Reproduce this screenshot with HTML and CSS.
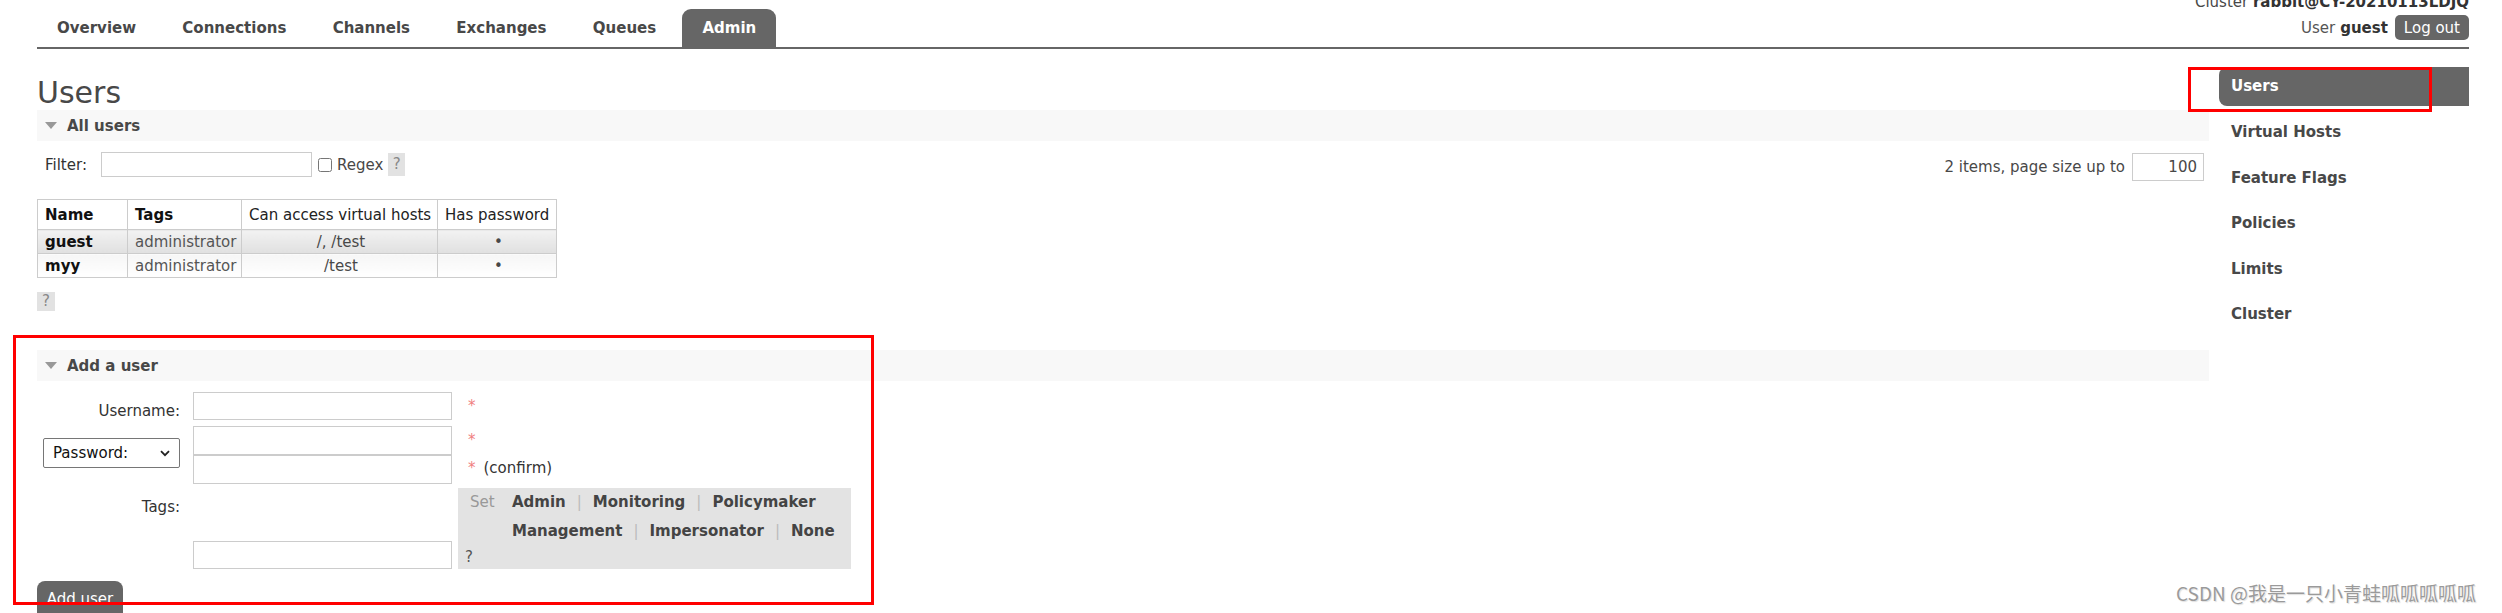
FILE: index.html
```html
<!DOCTYPE html>
<html lang="en">
<head>
<meta charset="utf-8">
<title>RabbitMQ Management</title>
<link rel="stylesheet" href="styles.css">
</head>
<body>
<div class="outer">
  <header class="header">
    <ul class="menu">
      <li><a class="tab">Overview</a></li>
      <li><a class="tab">Connections</a></li>
      <li><a class="tab">Channels</a></li>
      <li><a class="tab">Exchanges</a></li>
      <li><a class="tab">Queues</a></li>
      <li><a class="tab selected">Admin</a></li>
    </ul>
    <div class="login">
      <div class="cluster">Cluster <b>rabbit@CY-20210113LDJQ</b></div>
      <div class="user">User <b>guest</b><button class="logout">Log out</button></div>
    </div>
  </header>

  <div class="page">
    <main class="main">
      <h1 class="title">Users</h1>

      <section class="section">
        <h2 class="section-title"><span class="tri"></span>All users</h2>
        <div class="filter-row">
          <div class="filter-left">
            <label class="filter-label">Filter:</label>
            <input class="filter-input" type="text">
            <input class="regex-box" type="checkbox">
            <span class="regex-label">Regex</span>
            <span class="help">?</span>
          </div>
          <div class="filter-right">
            <span>2 items, page size up to</span>
            <input class="page-size" type="text" value="100">
          </div>
        </div>

        <table class="list">
          <colgroup>
            <col class="c-name"><col class="c-tags"><col class="c-vhosts"><col class="c-pass">
          </colgroup>
          <thead>
            <tr>
              <th class="strong">Name</th>
              <th class="strong">Tags</th>
              <th>Can access virtual hosts</th>
              <th>Has password</th>
            </tr>
          </thead>
          <tbody>
            <tr class="alt1">
              <td class="name">guest</td>
              <td class="tag">administrator</td>
              <td class="center">/, /test</td>
              <td class="center">•</td>
            </tr>
            <tr class="alt2">
              <td class="name">myy</td>
              <td class="tag">administrator</td>
              <td class="center">/test</td>
              <td class="center">•</td>
            </tr>
          </tbody>
        </table>
        <div class="help-row"><span class="help">?</span></div>
      </section>

      <section class="section add-section">
        <h2 class="section-title"><span class="tri"></span>Add a user</h2>
        <div class="form">
          <div class="frow row-user">
            <label class="flabel">Username:</label>
            <div class="fcell"><input class="finput" type="text"></div>
            <div class="fnote"><span class="req">*</span></div>
          </div>
          <div class="frow row-pass">
            <div class="flabel-sel">
              <div class="select">Password:<svg class="chev" width="10" height="7" viewBox="0 0 10 7"><path d="M1 1.2 L5 5.2 L9 1.2" fill="none" stroke="#222" stroke-width="1.8"/></svg></div>
            </div>
            <div class="fcell pass-stack">
              <input class="finput pass1" type="password">
              <input class="finput pass2" type="password">
            </div>
            <div class="fnote">
              <div class="nline"><span class="req">*</span></div>
              <div class="nline"><span class="req">*</span><span class="confirm">(confirm)</span></div>
            </div>
          </div>
          <div class="frow row-tags">
            <label class="flabel">Tags:</label>
            <div class="fcell tags-cell"><input class="finput" type="text"></div>
            <div class="tagbox">
              <div class="tag-lines">
                <span class="set">Set</span>
                <div class="links">
                  <div class="lline"><a>Admin</a><span class="sep">|</span><a>Monitoring</a><span class="sep">|</span><a>Policymaker</a></div>
                  <div class="lline"><a>Management</a><span class="sep">|</span><a>Impersonator</a><span class="sep">|</span><a>None</a></div>
                </div>
              </div>
              <div class="tag-help">?</div>
            </div>
          </div>
        </div>
        <button class="add-btn">Add user</button>
      </section>
    </main>

    <aside class="rhs">
      <ul class="rhs-list">
        <li class="rhs-item selected">Users</li>
        <li class="rhs-item">Virtual Hosts</li>
        <li class="rhs-item">Feature Flags</li>
        <li class="rhs-item">Policies</li>
        <li class="rhs-item">Limits</li>
        <li class="rhs-item">Cluster</li>
      </ul>
    </aside>
  </div>
</div>

<div class="mark mark-users"></div>
<div class="mark mark-form"></div>
<div class="watermark">CSDN @我是一只小青蛙呱呱呱呱呱</div>
</body>
</html>
```

FILE: styles.css
```css
* { box-sizing: border-box; }

html, body { height: 100%; }

body {
  margin: 0;
  font: 15px "DejaVu Sans", Verdana, sans-serif;
  color: #484848;
  background: #fff;
  overflow: hidden;
  position: relative;
}

.outer { margin: 0 33px 0 37px; }

/* ---------- header ---------- */
.header {
  display: flex;
  justify-content: space-between;
  align-items: flex-end;
  height: 49px;
  border-bottom: 2px solid #666;
}

.menu {
  display: flex;
  list-style: none;
  margin: 0;
  padding: 0;
}

.tab {
  display: block;
  height: 38px;
  line-height: 38px;
  padding: 0 20px;
  margin-right: 6.3px;
  font-weight: bold;
  color: #484848;
}

.tab.selected {
  background: #666;
  color: #fff;
  border-radius: 9px 9px 0 0;
}

.login {
  padding-bottom: 7px;
  display: flex;
  flex-direction: column;
  align-items: flex-end;
}

.cluster { line-height: 20px; margin-bottom: 3px; }
.cluster b, .user b { color: #333; }

.user {
  display: flex;
  align-items: center;
  height: 25px;
  color: #555;
}

.user b { margin-left: 5px; }

.logout {
  margin-left: 7px;
  height: 25px;
  padding: 0 9px;
  border: 0;
  border-radius: 5px;
  background: #666;
  color: #fff;
  font: 15px "DejaVu Sans", Verdana, sans-serif;
}

/* ---------- layout ---------- */
.page {
  display: flex;
  gap: 10px;
  align-items: flex-start;
}

.main { flex: 1; min-width: 0; }

.title {
  margin: 26px 0 0;
  font-size: 30px;
  line-height: 35px;
  font-weight: normal;
  color: #484848;
}

.section-title {
  margin: 0;
  height: 31px;
  display: flex;
  align-items: center;
  padding-left: 8px;
  background: #f8f8f8;
  font-size: 15px;
  font-weight: bold;
  color: #484848;
}

.tri {
  width: 0;
  height: 0;
  border-left: 6.5px solid transparent;
  border-right: 6.5px solid transparent;
  border-top: 7px solid #999;
  margin-right: 10px;
}

/* filter */
.filter-row {
  display: flex;
  justify-content: space-between;
  align-items: flex-start;
  margin-top: 11px;
  height: 29px;
}

.filter-left {
  display: flex;
  align-items: center;
  padding-left: 8px;
  height: 25px;
}

.filter-label { width: 56px; color: #333; }

.filter-input {
  width: 211px;
  height: 25px;
  border: 1px solid #ccc;
  padding: 0;
  margin: 0;
}

.regex-box {
  margin: 0 0 0 6px;
  width: 14px;
  height: 14px;
}

.regex-label { margin-left: 5px; color: #484848; }

.help {
  display: inline-block;
  width: 17px;
  height: 23px;
  line-height: 23px;
  text-align: center;
  background: #e2e2e2;
  color: #888;
}

.filter-left .help { margin-left: 5px; }

.filter-right {
  display: flex;
  align-items: center;
  margin-right: 5px;
  height: 29px;
  color: #484848;
}

.page-size {
  margin-left: 7px;
  width: 72px;
  height: 28px;
  border: 1px solid #ccc;
  padding: 0 6px 0 0;
  text-align: right;
  font: 15px "DejaVu Sans", Verdana, sans-serif;
  color: #484848;
}

/* table */
.list {
  margin-top: 18px;
  border-collapse: collapse;
  table-layout: fixed;
  width: 519px;
}

.c-name { width: 90px; }
.c-tags { width: 114px; }
.c-vhosts { width: 196px; }
.c-pass { width: 119px; }

.list th, .list td {
  border: 1px solid #ccc;
  padding: 0 4px 0 7px;
  white-space: nowrap;
  text-align: left;
}

.list th {
  height: 30px;
  font-weight: normal;
  color: #222;
  background: #fff;
}

.list th.strong { font-weight: bold; color: #111; }

.list td { height: 24px; }

.list tr.alt1 td { background: linear-gradient(#f2f2f2, #e0e0e0); }
.list tr.alt2 td { background: linear-gradient(#f6f6f6, #fff); }

.list td.name { font-weight: bold; color: #111; }
.list td.tag { color: #555; }
.list td.center { text-align: center; color: #484848; }

.help-row { margin-top: 14px; height: 19px; }
.help-row .help { width: 18px; height: 19px; line-height: 19px; }

/* add form */
.add-section { margin-top: 39px; }

.form { margin-top: 11px; }

.frow {
  display: grid;
  grid-template-columns: 156px 265px 1fr;
  align-items: start;
}

.row-pass { margin-top: 6px; }
.row-tags { margin-top: 4px; }

.flabel {
  text-align: right;
  padding-right: 13px;
  padding-top: 5px;
  height: 28px;
  line-height: 28px;
  color: #333;
}

.finput {
  display: block;
  width: 259px;
  height: 28px;
  border: 1px solid #ccc;
  margin: 0;
  padding: 0;
}

.pass-stack .pass1 { height: 29px; }
.pass-stack .pass2 { height: 29px; }

.fnote {
  padding-left: 10px;
  line-height: 28px;
  height: 28px;
}

.row-pass .fnote { height: 56px; }

.req { color: #f08080; }
.confirm { margin-left: 8px; color: #333; }

.flabel-sel { padding-left: 6px; padding-top: 12px; }

.select {
  width: 137px;
  height: 30px;
  border: 1px solid #767676;
  border-radius: 2px;
  display: flex;
  align-items: center;
  justify-content: space-between;
  padding: 0 9px 0 9px;
  color: #111;
  background: #fff;
}

.chev { display: block; }

.tags-cell { align-self: end; }

.tagbox {
  width: 393px;
  height: 81px;
  background: #e3e3e3;
  padding: 0 0 0 7px;
}

.tag-lines { display: flex; padding-left: 5px; }

.set { color: #999; width: 42px; line-height: 29px; }

.links { line-height: 29px; }

.links a { font-weight: bold; color: #444; }

.sep { color: #bbb; margin: 0 11px; font-weight: normal; }

.tag-help {
  line-height: 23px;
  color: #555;
}

.add-btn {
  display: block;
  margin-top: 12px;
  width: 86px;
  height: 36px;
  border: 0;
  border-radius: 8px 8px 0 0;
  background: #666;
  color: #fff;
  font: 15px "DejaVu Sans", Verdana, sans-serif;
  padding: 0;
}

/* sidebar */
.rhs { width: 250px; margin-top: 18px; }

.rhs-list { list-style: none; margin: 0; padding: 0; }

.rhs-item {
  height: 39px;
  line-height: 39px;
  padding-left: 12px;
  margin-bottom: 6.5px;
  font-weight: bold;
  color: #484848;
}

.rhs-item.selected {
  background: #666;
  color: #fff;
  border-radius: 8px 0 0 8px;
  margin-bottom: 7px;
}

/* overlays */
.mark {
  position: absolute;
  border: 3px solid #f00;
  pointer-events: none;
}

.mark-users { left: 2188px; top: 67px; width: 244px; height: 45px; }
.mark-form { left: 13px; top: 335px; width: 861px; height: 270px; }

.watermark {
  position: absolute;
  left: 2176px;
  top: 579px;
  font: 19px "Noto Sans CJK SC", "DejaVu Sans", sans-serif;
  line-height: 28px;
  color: #9a9a9a;
  text-shadow: 0 0 1px #fff, 1px 1px 1px #ddd;
  white-space: nowrap;
}
```
